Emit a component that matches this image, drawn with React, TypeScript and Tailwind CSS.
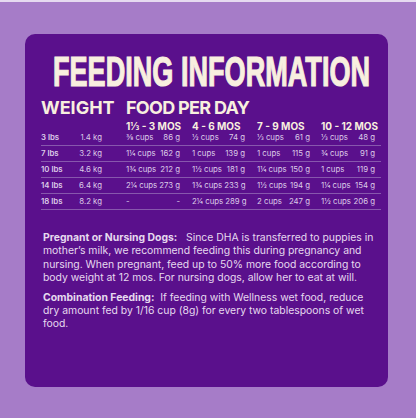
import React from "react";

type Amount = { cups: string; grams: string };

type Row = {
  lbs: string;
  kg: string;
  amounts: Amount[];
};

const ages = ["1⅓ - 3 MOS", "4 - 6 MOS", "7 - 9 MOS", "10 - 12 MOS"];

const rows: Row[] = [
  {
    lbs: "3 lbs",
    kg: "1.4 kg",
    amounts: [
      { cups: "⅜ cups", grams: "86 g" },
      { cups: "½ cups", grams: "74 g" },
      { cups: "⅓ cups", grams: "61 g" },
      { cups: "⅓ cups", grams: "48 g" },
    ],
  },
  {
    lbs: "7 lbs",
    kg: "3.2 kg",
    amounts: [
      { cups: "1¼ cups", grams: "162 g" },
      { cups: "1 cups", grams: "139 g" },
      { cups: "1 cups", grams: "115 g" },
      { cups: "¾ cups", grams: "91 g" },
    ],
  },
  {
    lbs: "10 lbs",
    kg: "4.6 kg",
    amounts: [
      { cups: "1¾ cups", grams: "212 g" },
      { cups: "1½ cups", grams: "181 g" },
      { cups: "1¼ cups", grams: "150 g" },
      { cups: "1 cups", grams: "119 g" },
    ],
  },
  {
    lbs: "14 lbs",
    kg: "6.4 kg",
    amounts: [
      { cups: "2¼ cups", grams: "273 g" },
      { cups: "1¾ cups", grams: "233 g" },
      { cups: "1½ cups", grams: "194 g" },
      { cups: "1¼ cups", grams: "154 g" },
    ],
  },
  {
    lbs: "18 lbs",
    kg: "8.2 kg",
    amounts: [
      { cups: "-", grams: "-" },
      { cups: "2¼ cups", grams: "289 g" },
      { cups: "2 cups", grams: "247 g" },
      { cups: "1½ cups", grams: "206 g" },
    ],
  },
];

// column widths + left margins for the four age columns
const colClass = ["w-[54px]", "ml-[12px] w-[53px]", "ml-[12px] w-[53px]", "ml-[11px] w-[54px]"];

export default function App() {
  return (
    <div
      className="w-[416px] h-[418px] bg-[#a67cc8] overflow-hidden"
      style={{ fontFamily: "Inter, 'Liberation Sans', sans-serif" }}
    >
      <div className="h-[2px] bg-[#e6daf0]" />
      <div className="pt-[32px] px-[25px]">
        <div className="w-[363px] h-[353px] rounded-[10px] bg-[#5a108c] text-[#e6d9ef]">
          {/* Title */}
          <div className="pt-[17px] pl-[28px] h-[67px]">
            <h1
              className="inline-block origin-left [transform:scaleX(0.645)] [-webkit-text-stroke:1.2px_#f8efdf] text-[42px] leading-none font-bold text-[#f8efdf] whitespace-nowrap"
              style={{ fontFamily: "'Liberation Sans', Arial, sans-serif" }}
            >
              FEEDING INFORMATION
            </h1>
          </div>

          {/* Table */}
          <div className="pl-[16px]">
            <div className="flex items-end h-[16px]">
              <div className="w-[85px] text-[18px] leading-none font-bold text-[#f8efdf]">WEIGHT</div>
              <div className="text-[18px] leading-none font-bold tracking-[-0.7px] text-[#f8efdf]">
                FOOD PER DAY
              </div>
            </div>
            <div className="flex h-[14px] items-end pl-[85px]">
              {ages.map((a, i) => (
                <div
                  key={a}
                  className={`${colClass[i]} text-center pr-[6px] text-[10px] leading-none font-bold text-[#f8efdf] whitespace-nowrap`}
                >
                  {a}
                </div>
              ))}
            </div>
            <div className="w-[340px] -mt-[1px]">
              {rows.map((r) => (
                <div
                  key={r.lbs}
                  className="flex items-center h-[16px] border-b border-[#8757ad] text-[7.8px] leading-none whitespace-nowrap text-[#dccbe8]"
                >
                  <div className="w-[36px] font-semibold">{r.lbs}</div>
                  <div className="w-[25px] text-right">{r.kg}</div>
                  <div className="w-[24px]" />
                  {r.amounts.map((m, i) => (
                    <div key={i} className={`${colClass[i]} flex justify-between gap-[2px]`}>
                      <span>{m.cups}</span>
                      <span>{m.grams}</span>
                    </div>
                  ))}
                </div>
              ))}
            </div>
          </div>

          {/* Notes */}
          <div className="px-[18px] pt-[21px] text-[10.4px] leading-[13.3px] whitespace-nowrap">
            <p>
              <span className="font-bold">Pregnant or Nursing Dogs:</span>
              {"\u00a0\u00a0\u00a0"}Since DHA is transferred to puppies in
              <br />
              mother’s milk, we recommend feeding this during pregnancy and
              <br />
              nursing. When pregnant, feed up to 50% more food according to
              <br />
              body weight at 12 mos. For nursing dogs, allow her to eat at will.
            </p>
            <p className="mt-[6.7px]">
              <span className="font-bold">Combination Feeding:</span>
              {"\u00a0\u00a0"}If feeding with Wellness wet food, reduce
              <br />
              dry amount fed by 1/16 cup (8g) for every two tablespoons of wet
              <br />
              food.
            </p>
          </div>
        </div>
      </div>
    </div>
  );
}
